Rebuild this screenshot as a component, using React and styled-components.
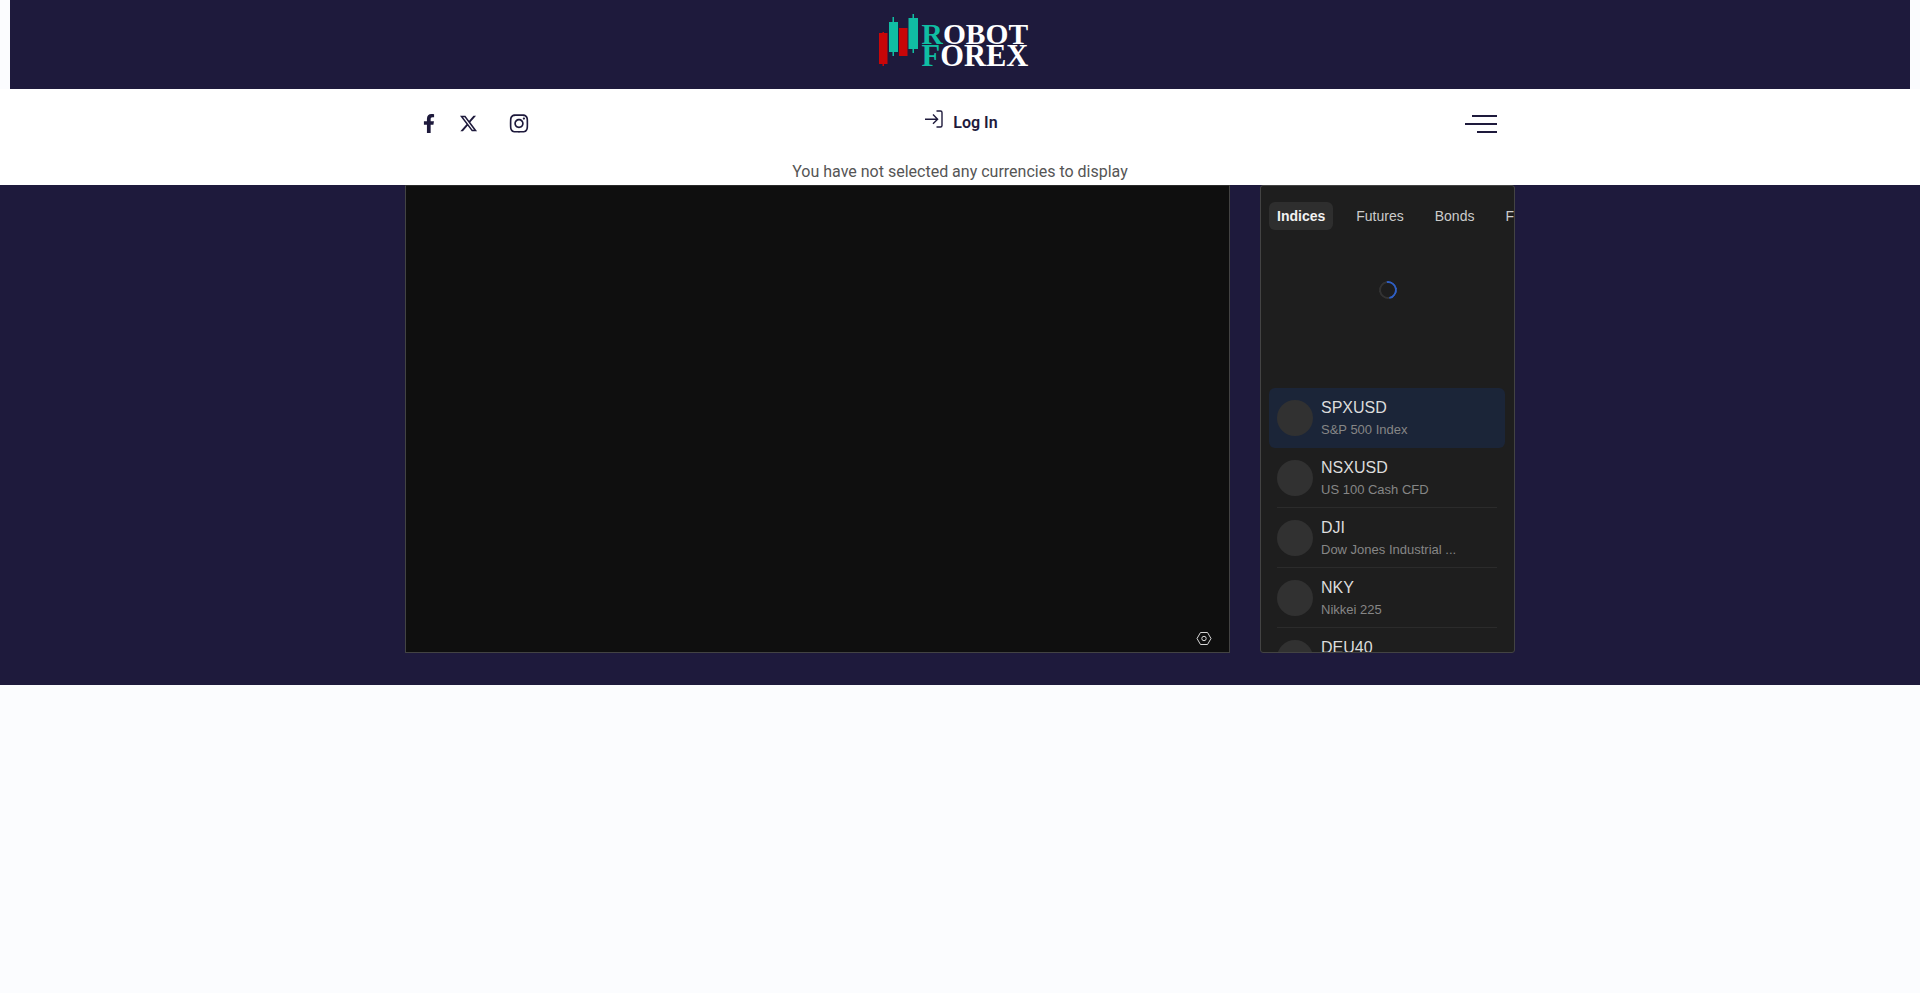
import styled, { createGlobalStyle } from 'styled-components';
import { FaFacebookF, FaInstagram } from 'react-icons/fa';
import { FaXTwitter } from 'react-icons/fa6';

const GlobalStyle = createGlobalStyle`
  html, body {
    margin: 0;
    padding: 0;
    background-color: #fbfcfe;
    font-family: Roboto, "Liberation Sans", sans-serif;
  }
`;

const TopBar = styled.header`
  display: flex;
  justify-content: center;
  align-items: center;
  height: 89px;
  margin: 0 10px;
  background-color: #1e1a3c;
`;

const Logo = styled.a`
  display: flex;
  align-items: center;
  gap: 3px;
  margin: 0 0 10px -13px;
  color: #fff;
  text-decoration: none;
`;

const LogoText = styled.div`
  display: flex;
  flex-direction: column;
  margin-top: 10px;
  font-family: "Liberation Serif", serif;
  font-weight: bold;
  line-height: 22px;
`;

const LogoLine = styled.span`
  font-size: ${(p) => p.$size}px;
`;

const Teal = styled.span`
  color: #10bda3;
`;

const WhiteBand = styled.section`
  background-color: #fff;
`;

const Nav = styled.nav`
  display: grid;
  grid-template-columns: 1fr auto 1fr;
  align-items: center;
  width: 1110px;
  height: 70px;
  margin: 0 auto;
`;

const Socials = styled.div`
  display: flex;
  align-items: center;
  padding: 0 0 2px 17px;
  color: #1e1a3c;
`;

const Social = styled.a`
  display: flex;
  justify-content: center;
  width: ${(p) => p.$w}px;
  margin-right: ${(p) => p.$gap}px;
  font-size: ${(p) => p.$size}px;
  color: inherit;
`;

const LoginLink = styled.a`
  display: flex;
  align-items: flex-start;
  gap: 10px;
  margin: -2px 0 0 2px;
  color: #1e1a3c;
  font-size: 16px;
  font-weight: 600;
  line-height: 20px;
`;

const LoginIcon = styled.svg`
  margin-top: -3px;
`;

const MenuButton = styled.button`
  display: flex;
  flex-direction: column;
  align-items: flex-end;
  gap: 6px;
  justify-self: end;
  margin-right: 18px;
  padding: 0;
  border: 0;
  background: none;
`;

const MenuLine = styled.span`
  display: block;
  width: ${(p) => p.$w}px;
  height: 2px;
  background-color: #1e1a3c;
`;

const Notice = styled.p`
  margin: 0;
  height: 26px;
  color: #555;
  font-size: 16px;
  line-height: 26px;
  text-align: center;
`;

const DarkBand = styled.main`
  height: 500px;
  background-color: #1e1a3c;
`;

const Columns = styled.div`
  display: flex;
  justify-content: space-between;
  width: 1110px;
  height: 468px;
  margin: 0 auto;
`;

const ChartPanel = styled.div`
  display: flex;
  align-items: flex-end;
  justify-content: flex-end;
  box-sizing: border-box;
  width: 825px;
  padding: 0 17px 6px 0;
  background-color: #0f0f0f;
  border: 1px solid #434343;
  border-top-color: #2a2a2a;
  color: #d6d6d6;
`;

const SidePanel = styled.aside`
  box-sizing: border-box;
  width: 255px;
  overflow: hidden;
  background-color: #1e1e1e;
  border: 1px solid #434343;
  border-radius: 3px;
  font-family: "Liberation Sans", sans-serif;
`;

const Tabs = styled.div`
  display: flex;
  align-items: center;
  gap: 15px;
  height: 28px;
  margin-top: 16px;
  padding-left: 8px;
  white-space: nowrap;
`;

const Tab = styled.button`
  flex: none;
  height: 28px;
  padding: 0 8px;
  border: 0;
  border-radius: 6px;
  background-color: ${(p) => (p.$active ? '#2e2e2e' : 'transparent')};
  color: ${(p) => (p.$active ? '#f2f2f2' : '#cccccc')};
  font-family: inherit;
  font-size: 14px;
  font-weight: ${(p) => (p.$active ? 'bold' : 'normal')};
`;

const SpinnerArea = styled.div`
  display: flex;
  justify-content: center;
  box-sizing: border-box;
  height: 158px;
  padding-top: 51px;
`;

const Spinner = styled.div`
  box-sizing: border-box;
  width: 18px;
  height: 18px;
  border: 2px solid #333;
  border-top-color: #2f5fc4;
  border-right-color: #2f5fc4;
  border-radius: 50%;
  transform: rotate(35deg);
`;

const Symbols = styled.ul`
  margin: 0;
  padding: 0 9px 0 8px;
  list-style: none;
`;

const Symbol = styled.li`
  height: 60px;
  padding: 0 8px;
  border-radius: 6px;
  background-color: ${(p) => (p.$selected ? '#1b2538' : 'transparent')};
`;

const SymbolInner = styled.div`
  display: flex;
  align-items: center;
  gap: 8px;
  box-sizing: border-box;
  height: 100%;
  border-bottom: 1px solid ${(p) => (p.$plain ? 'transparent' : '#2b2b2b')};
`;

const Avatar = styled.div`
  flex: none;
  width: 36px;
  height: 36px;
  border-radius: 50%;
  background-color: #313131;
`;

const SymbolName = styled.div`
  margin: 1px 0 3px;
  color: #dcdcdc;
  font-size: 16px;
  line-height: 20px;
`;

const SymbolDesc = styled.div`
  color: #868686;
  font-size: 13px;
  line-height: 18px;
`;

const symbols = [
  { name: 'SPXUSD', desc: 'S&P 500 Index' },
  { name: 'NSXUSD', desc: 'US 100 Cash CFD' },
  { name: 'DJI', desc: 'Dow Jones Industrial ...' },
  { name: 'NKY', desc: 'Nikkei 225' },
  { name: 'DEU40', desc: 'DAX Index' },
];

function App() {
  return (
    <>
      <GlobalStyle />
      <TopBar>
        <Logo href="#">
          <svg width="40" height="54" viewBox="0 0 40 54" aria-hidden="true">
            <rect x="3.5" y="19" width="1.5" height="34" fill="#c80608" />
            <rect x="0" y="20" width="8.5" height="31" fill="#c80608" />
            <rect x="13.5" y="4" width="1.5" height="39" fill="#10bda3" />
            <rect x="10" y="9" width="9" height="30" fill="#10bda3" />
            <rect x="20" y="15" width="8.5" height="28" fill="#c80608" />
            <rect x="33.5" y="1" width="1.5" height="39" fill="#10bda3" />
            <rect x="29.5" y="5" width="9.5" height="31" fill="#10bda3" />
          </svg>
          <LogoText>
            <LogoLine $size={29.5}><Teal>R</Teal>OBOT</LogoLine>
            <LogoLine $size={30.5}><Teal>F</Teal>OREX</LogoLine>
          </LogoText>
        </Logo>
      </TopBar>
      <WhiteBand>
        <Nav>
          <Socials>
            <Social $w={14} $gap={22.5} $size={19}><FaFacebookF /></Social>
            <Social $w={20} $gap={30} $size={19}><FaXTwitter /></Social>
            <Social $w={20} $gap={0} $size={21}><FaInstagram /></Social>
          </Socials>
          <LoginLink>
            <LoginIcon width="19" height="19" viewBox="0 0 19 19" fill="none" stroke="#1e1a3c" strokeWidth="1.4" aria-hidden="true">
              <path d="M12.5 1h4a1.5 1.5 0 0 1 1.5 1.5v13a1.5 1.5 0 0 1-1.5 1.5h-4" />
              <path d="M1 9.2h12.5M9 4.6l4.6 4.6L9 13.8" />
            </LoginIcon>
            Log In
          </LoginLink>
          <MenuButton aria-label="Menu">
            <MenuLine $w={25} />
            <MenuLine $w={32} />
            <MenuLine $w={20} />
          </MenuButton>
        </Nav>
        <Notice>You have not selected any currencies to display</Notice>
      </WhiteBand>
      <DarkBand>
        <Columns>
          <ChartPanel>
            <svg width="16" height="15" viewBox="0 0 16 15" fill="none" stroke="currentColor" aria-hidden="true">
              <path d="M4.5 1.5h7L15 7.5l-3.5 6h-7L1 7.5z" />
              <circle cx="8" cy="7.5" r="2.2" />
            </svg>
          </ChartPanel>
          <SidePanel>
            <Tabs>
              <Tab $active>Indices</Tab>
              <Tab>Futures</Tab>
              <Tab>Bonds</Tab>
              <Tab>Forex</Tab>
            </Tabs>
            <SpinnerArea>
              <Spinner />
            </SpinnerArea>
            <Symbols>
              {symbols.map((s, i) => (
                <Symbol key={s.name} $selected={i === 0}>
                  <SymbolInner $plain={i === 0}>
                    <Avatar />
                    <div>
                      <SymbolName>{s.name}</SymbolName>
                      <SymbolDesc>{s.desc}</SymbolDesc>
                    </div>
                  </SymbolInner>
                </Symbol>
              ))}
            </Symbols>
          </SidePanel>
        </Columns>
      </DarkBand>
    </>
  );
}

export default App;
